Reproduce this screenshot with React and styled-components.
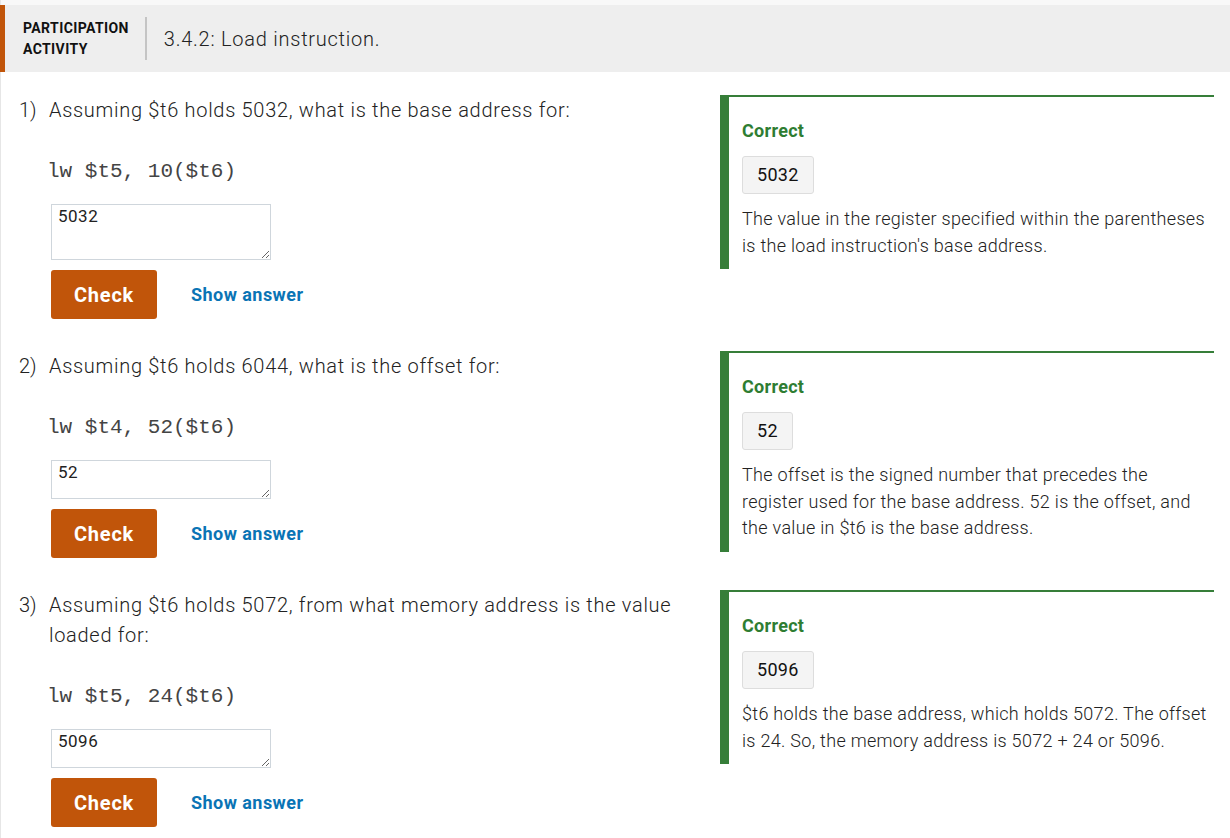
import React from 'react';
import styled, { createGlobalStyle } from 'styled-components';

const GlobalStyle = createGlobalStyle`
  html, body {
    margin: 0;
    padding: 0;
    background: #ffffff;
    font-family: Roboto, "Noto Sans", sans-serif;
    color: #222222;
  }
`;

const questions = [
  {
    num: '1)',
    text: 'Assuming $t6 holds 5032, what is the base address for:',
    code: 'lw $t5, 10($t6)',
    value: '5032',
    tall: true,
    explain: "The value in the register specified within the parentheses is the load instruction's base address.",
  },
  {
    num: '2)',
    text: 'Assuming $t6 holds 6044, what is the offset for:',
    code: 'lw $t4, 52($t6)',
    value: '52',
    explain: 'The offset is the signed number that precedes the register used for the base address. 52 is the offset, and the value in $t6 is the base address.',
  },
  {
    num: '3)',
    text: 'Assuming $t6 holds 5072, from what memory address is the value loaded for:',
    code: 'lw $t5, 24($t6)',
    value: '5096',
    explain: '$t6 holds the base address, which holds 5072. The offset is 24. So, the memory address is 5072 + 24 or 5096.',
  },
];

const App = () => {
  return (
    <>
      <GlobalStyle />
      <StyledActivity>
        <StyledHeader>
          <StyledLabel>
            PARTICIPATION
            <br />
            ACTIVITY
          </StyledLabel>
          <StyledDivider />
          <StyledTitle>3.4.2: Load instruction.</StyledTitle>
        </StyledHeader>
        <StyledQuestionList>
          {questions.map((q) => (
            <StyledQuestionRow key={q.num}>
              <StyledQuestion>
                <StyledPrompt>
                  <StyledNumber>{q.num}</StyledNumber>
                  <span>{q.text}</span>
                </StyledPrompt>
                <StyledCode>{q.code}</StyledCode>
                <StyledAnswerInput $tall={q.tall} defaultValue={q.value} />
                <StyledActions>
                  <StyledCheckButton>Check</StyledCheckButton>
                  <StyledShowAnswer>Show answer</StyledShowAnswer>
                </StyledActions>
              </StyledQuestion>
              <StyledFeedback>
                <StyledCorrect>Correct</StyledCorrect>
                <StyledAnswerChip>{q.value}</StyledAnswerChip>
                <StyledExplanation>{q.explain}</StyledExplanation>
              </StyledFeedback>
            </StyledQuestionRow>
          ))}
        </StyledQuestionList>
      </StyledActivity>
    </>
  );
};

const StyledActivity = styled.div`
  padding-top: 5px;
  background: linear-gradient(#f8f8f8, #f8f8f8) top / 100% 5px no-repeat;
  border-left: 1px solid #e6e6e6;
  min-height: 833px;
`;

const StyledHeader = styled.div`
  display: flex;
  align-items: center;
  height: 67px;
  background-color: #eeeeee;
  border-left: 5px solid #c1550a;
  margin-left: -1px;
  padding-left: 18px;
`;

const StyledLabel = styled.div`
  font-size: 14px;
  font-weight: 700;
  line-height: 21px;
  color: #111111;
  letter-spacing: 0.4px;
`;

const StyledDivider = styled.div`
  width: 2px;
  height: 43px;
  background-color: #c4c4c4;
  margin: 0 17px 0 16px;
`;

const StyledTitle = styled.h2`
  margin: 0;
  font-size: 20px;
  font-weight: 300;
  letter-spacing: 0.75px;
  color: #222222;
`;

const StyledQuestionList = styled.div`
  display: flex;
  flex-direction: column;
  gap: 32px;
  padding-top: 23px;
`;

const StyledQuestionRow = styled.div`
  display: flex;
  align-items: flex-start;
`;

const StyledQuestion = styled.div`
  width: 719px;
  padding-left: 18px;
  box-sizing: border-box;
`;

const StyledPrompt = styled.div`
  display: flex;
  font-size: 20px;
  font-weight: 300;
  line-height: 30px;
  letter-spacing: 0.7px;
  color: #222222;
  padding-right: 22px;
`;

const StyledNumber = styled.span`
  flex: none;
  width: 30px;
  letter-spacing: 0;
`;

const StyledCode = styled.div`
  margin: 32px 0 0 28px;
  font-family: "Liberation Mono", "DejaVu Sans Mono", monospace;
  font-size: 21px;
  line-height: 30px;
  color: #444444;
`;

const StyledAnswerInput = styled.textarea`
  display: block;
  box-sizing: border-box;
  margin: 17px 0 0 32px;
  width: 220px;
  height: ${(props) => (props.$tall ? '56px' : '39px')};
  padding: 1px 6px;
  border: 1px solid #cfd6dc;
  border-radius: 0;
  font-family: Roboto, sans-serif;
  font-size: 17px;
  font-weight: 400;
  letter-spacing: 0.5px;
  line-height: 21px;
  color: #222222;
  resize: both;
  outline: none;
`;

const StyledActions = styled.div`
  display: flex;
  align-items: center;
  gap: 34px;
  margin: 10px 0 0 32px;
`;

const StyledCheckButton = styled.button`
  width: 106px;
  height: 49px;
  background-color: #c1550a;
  color: #ffffff;
  border: none;
  border-radius: 3px;
  font-family: Roboto, sans-serif;
  font-size: 20px;
  font-weight: 700;
  letter-spacing: 0.8px;
  cursor: pointer;
`;

const StyledShowAnswer = styled.a`
  font-size: 18px;
  font-weight: 700;
  letter-spacing: 0.45px;
  color: #0a74b5;
  cursor: pointer;
`;

const StyledFeedback = styled.div`
  width: 494px;
  box-sizing: border-box;
  border-top: 2px solid #367e39;
  border-left: 9px solid #367e39;
  padding: 23px 6px 10px 13px;
`;

const StyledCorrect = styled.div`
  font-size: 18px;
  font-weight: 700;
  line-height: 22px;
  letter-spacing: 0.3px;
  color: #2e7d32;
`;

const StyledAnswerChip = styled.div`
  display: inline-block;
  margin-top: 14px;
  padding: 0 14px;
  height: 38px;
  line-height: 36px;
  box-sizing: border-box;
  background-color: #f4f4f4;
  border: 1px solid #dddddd;
  border-radius: 3px;
  font-size: 18px;
  font-weight: 400;
  letter-spacing: 0.3px;
  color: #111111;
`;

const StyledExplanation = styled.p`
  margin: 12px 0 0;
  font-size: 18px;
  font-weight: 300;
  line-height: 26.5px;
  letter-spacing: 0.3px;
  color: #222222;
`;

export default App;
